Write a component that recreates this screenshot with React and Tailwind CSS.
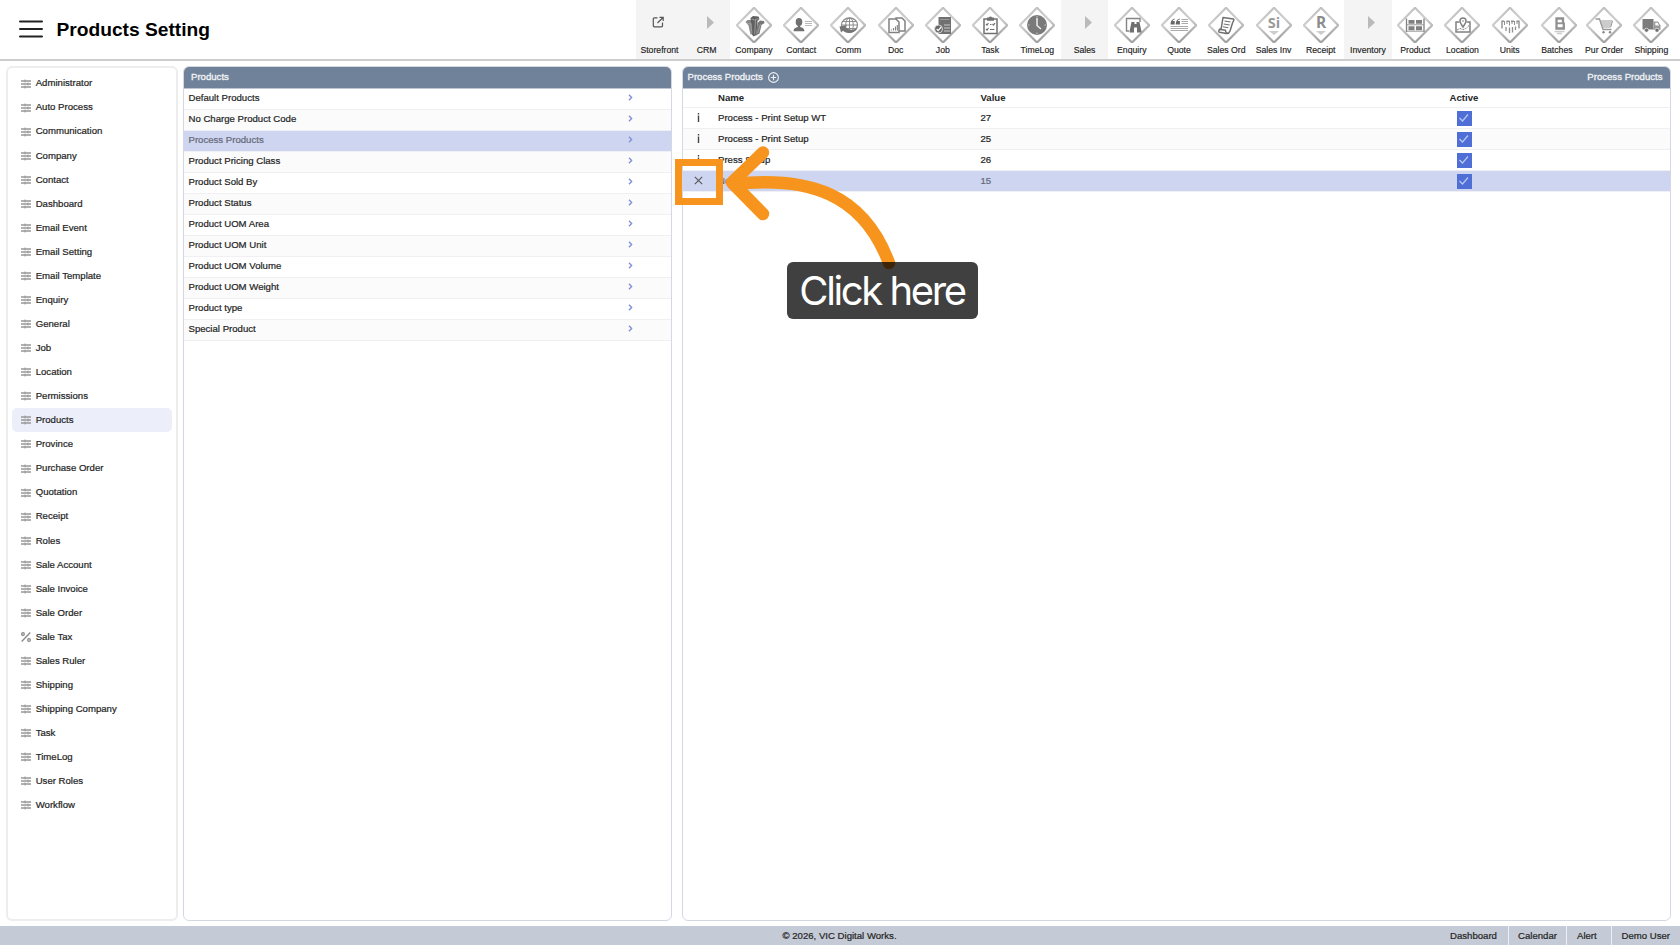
import React from "react";

const settings = [
  "Administrator", "Auto Process", "Communication", "Company", "Contact", "Dashboard", "Email Event",
  "Email Setting", "Email Template", "Enquiry", "General", "Job", "Location", "Permissions", "Products",
  "Province", "Purchase Order", "Quotation", "Receipt", "Roles", "Sale Account", "Sale Invoice",
  "Sale Order", "Sale Tax", "Sales Ruler", "Shipping", "Shipping Company", "Task", "TimeLog",
  "User Roles", "Workflow",
];

const products = [
  "Default Products", "No Charge Product Code", "Process Products", "Product Pricing Class",
  "Product Sold By", "Product Status", "Product UOM Area", "Product UOM Unit", "Product UOM Volume",
  "Product UOM Weight", "Product type", "Special Product",
];

const rows = [
  { name: "Process - Print Setup WT", value: "27" },
  { name: "Process - Print Setup", value: "25" },
  { name: "Press Setup", value: "26" },
  { name: "New", value: "15", selected: true },
];

/* Glyphs are drawn in a 36x36 box, centred on 18,18. */
const glyphs = {
  Company: (
    <g>
      <path d="M9.500 15l2-2 3.500 0 2 2 .5 12-3 .5-2-9z" fill="#8a8a8a" />
      <path d="M14.500 11l2.500-2 5.500.5 1 2.500-2 2-1 14-3 1.500-1.500-2z" fill="#606060" />
      <path d="M21.500 16l2.500-2.500 4 .5.500 2-3 2-2 8.500-3.500 2z" fill="#777" />
      <path d="M11.500 16.500l4 .5M15 16.500l1 10M19.500 12.500l-.8 15M15.500 12l3 1 4-1.500M24.500 17l-3 9" fill="none" stroke="#b0b0b0" strokeWidth=".7" />
    </g>
  ),
  Contact: (
    <g>
      <ellipse cx="16" cy="15" rx="3.300" ry="4" fill="#707070" />
      <path d="M10.600 24.200c0-3.200 2.200-3.400 4.200-4.200v-2h2.400v2c2 .8 4.200 1 4.200 4.200z" fill="#707070" />
      <path d="M22 14.500h7M22 16.500h7M22 18.500h7" stroke="#bbb" strokeWidth="1" />
    </g>
  ),
  Comm: (
    <g fill="none" stroke="#8c8c8c">
      <ellipse cx="19.500" cy="18" rx="8" ry="7" strokeWidth="1.300" />
      <ellipse cx="19.500" cy="18" rx="3.800" ry="7" />
      <path d="M11.500 18h16M13 14.500h13M13 21.500h13M19.500 11v14" />
      <path d="M9.500 19.500l7.500-1.500-1.500 2.200c2.500 2.800 7 3.300 12 1-3 5-10 6.300-14.500 2.500l-2 1.800z" fill="#757575" stroke="none" />
    </g>
  ),
  Doc: (
    <g fill="#fff" stroke="#808080" strokeWidth="1.500">
      <path d="M18 11h6l3 3v10h-9z" />
      <path d="M11 12h7l3 3v10.500H11z" />
      <path d="M13.500 23.500v-1M15.500 23.500v-2.500M17.500 23.500v-4M19.300 23.500v-5.500" strokeWidth="1.100" />
    </g>
  ),
  Job: (
    <g>
      <path d="M13.500 10H26v17H13.500z" fill="#707070" />
      <path d="M19 18h6M19 21h6M19 24h6" stroke="#ccc" strokeWidth="1" />
      <path d="M15 12.500h9.500" stroke="#999" strokeWidth="1" />
      <circle cx="13.500" cy="22" r="4" fill="#666" stroke="#eee" strokeWidth=".8" />
      <path d="M11.700 22l1.500 1.600 3-3.600" fill="none" stroke="#fff" strokeWidth="1.200" />
    </g>
  ),
  Task: (
    <g fill="none" stroke="#707070">
      <path d="M12 12h13v14.500H12z" fill="#fff" strokeWidth="1.500" />
      <path d="M15 10.500h2a1.600 1.600 0 0 1 3 0h2v3.300h-7z" fill="#707070" stroke="none" />
      <path d="M14 17l1 1 1.500-2M14 22l1 1 1.500-2M18 17.500h1.500M20.500 17l1 1 1.500-2M18 22.500h4.500" strokeWidth="1.200" />
    </g>
  ),
  TimeLog: (
    <g>
      <circle cx="18" cy="18" r="10" fill="#7a7a7a" />
      <path d="M18 11v7.500l4 3.500" fill="none" stroke="#eee" strokeWidth="1.500" />
      <path d="M18 9v1.500M18 25.500V27M9 18h1.500M25.500 18H27" stroke="#ccc" strokeWidth="1" />
    </g>
  ),
  Enquiry: (
    <g>
      <path d="M15 24h-2.500V11.500H26V15" fill="none" stroke="#858585" strokeWidth="1.400" />
      <path d="M17.500 15h3v2h2v-2h3l2 9.500v1h-4.500v-5h-3v5h-4.500v-1z" fill="#707070" />
    </g>
  ),
  Quote: (
    <g>
      <path d="M13.500 11.500c-3 1-4 3-4 6h4.200v-3.500H11.700c0-.8.800-1.300 2-1.600zM18.700 11.500c-3 1-4 3-4 6h4.200v-3.500h-2c0-.8.800-1.300 2-1.600z" fill="#666" />
      <path d="M20.500 12.500h6.500M20.500 14.500h6.500M20.500 16.500h6.500M9.500 19.500h17.500M9.500 21.500h17.500M9.500 23.500h17.500" stroke="#aaa" strokeWidth="1" />
    </g>
  ),
  "Sales Ord": (
    <g fill="#fff" stroke="#707070" strokeWidth="1.500" strokeLinejoin="round">
      <path d="M15 10.500l10.500 1.500c1.500 1-.5 2-1 4l-2.500 8c-.8 2-2 2.800-3.500 2.500l-7-1.200c-1.500-.5-.5-2 0-3l1.500.2z" />
      <path d="M11.500 22.300l6 1c.2 2 .8 3.200 2.500 3" fill="none" />
      <path d="M16.500 14l6 1M15.700 17l6 1M14.800 19.700l5.500 1" strokeWidth="1.100" />
    </g>
  ),
  "Sales Inv": (
    <g>
      <text x="18" y="21.300" textAnchor="middle" fontSize="14.500" fontWeight="700" fill="#999" fontFamily="Open Sans, sans-serif">Si</text>
      <path d="M13 24h10l-5 4z" fill="#ccc" />
    </g>
  ),
  Receipt: (
    <g>
      <text x="18" y="21.300" textAnchor="middle" fontSize="15.500" fontWeight="700" fill="#8c8c8c" fontFamily="Open Sans, sans-serif">R</text>
      <path d="M13 24h10l-5 4z" fill="#ccc" />
    </g>
  ),
  Product: (
    <g>
      <path d="M9.500 11.500v13.500M27 11.500v13.500" stroke="#808080" strokeWidth="1.300" />
      <path d="M9.500 17.800H27M9.500 24.200H27" stroke="#999" strokeWidth="1" />
      <path d="M11.500 13h6v3.800h-6zM19 13h6v3.800h-6zM11.500 19.300h6v4h-6zM19 19.300h6v4h-6z" fill="#808080" />
    </g>
  ),
  Location: (
    <g fill="none" stroke="#808080" strokeWidth="1.500">
      <path d="M15.500 15h-3.500v10h14V15h-3.500" />
      <path d="M19 20c-2-3-3-4-3-6a3 3 0 0 1 6 0c0 2-1 3-3 6z" fill="#fff" />
      <circle cx="19" cy="14" r=".8" fill="#808080" stroke="none" />
      <path d="M13 23l3-1.500 3 1 3-1 3-3" strokeWidth="1" strokeDasharray="2 1" />
    </g>
  ),
  Units: (
    <g fill="none" stroke="#909090" strokeWidth="1.400">
      <path d="M10 21.500v-7.200H12M24.500 14.300H27v7.200M14.500 14.300h3M19 14.300h3" />
      <path d="M12.500 14v4M15 14v3M17.500 14v4.500M20 14v3M22.500 14v4M25 14v3" strokeWidth="1" />
      <path d="M14 20v4M17.500 20.500v5.500M20.500 20v5.500M23.500 19.500v3.500" strokeWidth="1.300" />
    </g>
  ),
  Batches: (
    <g>
      <path d="M15.500 11.500h6.500v4l.8 1v5h-7.300z" fill="none" stroke="#909090" strokeWidth="2.300" />
      <path d="M15.500 16.300h6.500" stroke="#909090" strokeWidth="1.800" />
      <path d="M13.500 24.500h10M16 26.500h5" stroke="#ccc" strokeWidth="1.300" />
    </g>
  ),
  "Pur Order": (
    <g fill="none" stroke="#999" strokeWidth="1.400">
      <path d="M9.500 12h4l3.500 10.500h8.500" />
      <path d="M15 14h11.500l-1.700 6h-8M15.500 16h10M16 18h9" strokeWidth="1" />
      <circle cx="17.500" cy="25.300" r="1.200" fill="#888" stroke="none" />
      <circle cx="24" cy="25.300" r="1.200" fill="#888" stroke="none" />
    </g>
  ),
  Shipping: (
    <g>
      <path d="M9.500 12h11v10.500h-11z" fill="#7c7c7c" />
      <path d="M20.500 14.500h4.500l2.500 4v4.500h-7z" fill="#999" />
      <path d="M22.300 15.800h2.200l1.500 2.700h-3.700z" fill="#fff" />
      <circle cx="13.500" cy="23.200" r="2" fill="#6c6c6c" stroke="#fff" strokeWidth=".6" />
      <circle cx="24" cy="23.200" r="2" fill="#6c6c6c" stroke="#fff" strokeWidth=".6" />
    </g>
  ),
};

const nav = [
  "Storefront", "CRM", "Company", "Contact", "Comm", "Doc", "Job", "Task", "TimeLog", "Sales", "Enquiry",
  "Quote", "Sales Ord", "Sales Inv", "Receipt", "Inventory", "Product", "Location", "Units", "Batches",
  "Pur Order", "Shipping",
];

function NavIcon({ name }) {
  if (name === "Storefront") {
    return (
      <svg className="-ml-0.5 mt-4 size-3" viewBox="0 0 12 12" fill="none" stroke="#555" strokeWidth="1.200">
        <path d="M5.500 1.800H2.300c-.6 0-1 .4-1 1v7c0 .6.400 1 1 1h7.200c.6 0 1-.4 1-1V6.500M7.500 1.300h3.700V5M11 1.500L5.500 7" />
      </svg>
    );
  }
  if (!glyphs[name]) {
    return (
      <svg className="ml-[7px] mt-4 h-[13px] w-[7px]" viewBox="0 0 7 13">
        <path d="M0 0v13l7-6.500z" fill="#bababa" />
      </svg>
    );
  }
  return (
    <svg className={name === "Batches" ? "ml-1 mt-[7px] size-9" : "mt-[7px] size-9"} viewBox="0 0 36 36">
      <defs>
        <linearGradient id="edge" x1="0" y1="0" x2=".3" y2="1">
          <stop offset="0" stopColor="#bdbdbd" />
          <stop offset=".5" stopColor="#cecece" />
          <stop offset="1" stopColor="#a2a2a2" />
        </linearGradient>
      </defs>
      <path d="M18 .8L35.200 18.200 18 35.500 .8 18.200z" fill="#fff" stroke="url(#edge)" strokeWidth="2.200" />
      {glyphs[name]}
    </svg>
  );
}

function NavItem({ name }) {
  return (
    <div className={`flex w-[47.240px] shrink-0 flex-col items-center ${glyphs[name] ? "" : "bg-[#f4f4f4]"}`}>
      <div className="flex h-[45px] items-start justify-center">
        <NavIcon name={name} />
      </div>
      <span className="whitespace-nowrap text-[8.700px] leading-[11px] text-[#222] [-webkit-text-stroke:0.150px]">{name}</span>
    </div>
  );
}

function SettingIcon({ percent }) {
  return percent ? (
    <svg className="size-2.5" viewBox="0 0 10 10" fill="none" stroke="#888" strokeWidth="1.300">
      <path d="M9.300.5L.7 9.500" />
      <circle cx="2" cy="2" r="1.300" />
      <circle cx="8" cy="8" r="1.300" />
    </svg>
  ) : (
    <svg className="size-2.5" viewBox="0 0 10 10" fill="none" stroke="#989898">
      <path d="M0 2h10M0 5h10M0 8h10" strokeWidth="1.300" />
      <path d="M4 .5v3M7 3.500v3M4 6.500v3" strokeWidth="1" />
    </svg>
  );
}

function Check() {
  return (
    <span className="flex size-[15px] items-center justify-center bg-[#4f6fd6]">
      <svg className="h-2.5 w-3" viewBox="0 0 12 10" fill="none" stroke="#b9c7f2" strokeWidth="1.200">
        <path d="M1.500 5l3 3L10 1.500" />
      </svg>
    </span>
  );
}

const grid = "grid grid-cols-[35px_262.500px_458.500px_50px_1fr] items-center";

export default function App() {
  return (
    <div className="relative flex h-[945px] w-[1680px] flex-col overflow-hidden bg-white font-['Liberation_Sans',Arial,sans-serif] text-[9.600px] text-[#262626] [-webkit-text-stroke:0.220px]">
      <header className="flex h-[61px] shrink-0 border-b-2 border-[#cdcdcd] pr-[5px]">
        <div className="flex flex-1 items-center pl-[19px]">
          <svg className="mb-px h-[18px] w-6" viewBox="0 0 24 18" stroke="#222" strokeWidth="2" strokeLinecap="round">
            <path d="M1 1.500h22M1 9h22M1 16.500h22" />
          </svg>
          <h1 className="ml-[13.500px] text-[19.200px] font-bold leading-6 text-black [-webkit-text-stroke:0]">Products Setting</h1>
        </div>
        <nav className="flex">
          {nav.map((n) => <NavItem key={n} name={n} />)}
        </nav>
      </header>

      <main className="flex h-[860px] shrink-0 pl-[5.500px] pt-[5px]">
        <aside className="h-[855px] w-[172.500px] shrink-0 rounded-md border-2 border-[#ededed] px-1 pt-[3.500px]">
          {settings.map((s) => (
            <div key={s} className={`flex h-[24.070px] items-center gap-[4.700px] rounded-[5px] pl-[9.500px] ${s === "Products" ? "bg-[#eceefa]" : ""}`}>
              <SettingIcon percent={s === "Sale Tax"} />
              <span>{s}</span>
            </div>
          ))}
        </aside>

        <section className="ml-[5px] h-[855px] w-[489px] shrink-0 overflow-hidden rounded-md border border-[#d3d8e2]">
          <div className="flex h-[21.500px] items-center border-b border-[#bcc5d3] bg-[#708299] pl-[7px] text-[#f1f3f6] [-webkit-text-stroke:0.320px]">Products</div>
          {products.map((p, i) => (
            <div
              key={p}
              className={`flex h-[21px] items-center justify-between border-b border-[#f0f0f2] pl-[4.500px] pr-[38px] ${
                p === "Process Products" ? "bg-[#ced5f0] text-[#666a78]" : i % 2 ? "bg-[#fbfbfb]" : ""
              }`}
            >
              <span>{p}</span>
              <svg className="mb-[3px] h-[7px] w-[5px]" viewBox="0 0 5 7" fill="none" stroke="#8090da" strokeWidth="1.400">
                <path d="M1 .8l2.600 2.700L1 6.200" />
              </svg>
            </div>
          ))}
        </section>

        <section className="ml-2.5 h-[855px] w-[989px] shrink-0 overflow-hidden rounded-md border border-[#d3d8e2]">
          <div className="flex h-[21.500px] items-center justify-between border-b border-[#bcc5d3] bg-[#708299] pl-[4.500px] pr-[7.500px] text-[#f1f3f6] [-webkit-text-stroke:0.320px]">
            <span className="flex items-center gap-[5px]">
              Process Products
              <svg className="size-[11px]" viewBox="0 0 11 11" fill="none" stroke="#eef1f5" strokeWidth="1.100">
                <circle cx="5.500" cy="5.500" r="4.900" />
                <path d="M5.500 2.800v5.400M2.800 5.500h5.400" />
              </svg>
            </span>
            <span>Process Products</span>
          </div>
          <div className={`${grid} h-[19.500px] border-b border-[#f0f0f2] pt-px font-bold [-webkit-text-stroke:0]`}>
            <span />
            <span>Name</span>
            <span>Value</span>
            <span className="text-center">Active</span>
          </div>
          {rows.map((r, i) => (
            <div
              key={r.name}
              className={`${grid} h-[21px] border-b border-[#f0f0f2] ${
                r.selected ? "bg-[#ced5f0] text-[#666a78]" : i % 2 ? "bg-[#fbfbfb]" : ""
              }`}
            >
              <span className="flex justify-center pb-px pr-[5px]">
                {r.selected ? (
                  <svg className="size-[9px]" viewBox="0 0 9 9" stroke="#555" strokeWidth="1.100">
                    <path d="M.8.8l7.400 7.400M8.200.8L.8 8.200" />
                  </svg>
                ) : (
                  <svg className="h-[9px] w-[3px]" viewBox="0 0 3 9" fill="#444">
                    <path d="M.8 0h1.400v1.400H.8zM.8 2.600h1.400V9H.8z" />
                  </svg>
                )}
              </span>
              <span>{r.name}</span>
              <span>{r.value}</span>
              <span className="flex justify-center"><Check /></span>
            </div>
          ))}
        </section>
      </main>

      <footer className="mt-[5px] flex h-[19px] shrink-0 items-center bg-[#c5cbd6]">
        <span className="ml-[782.500px] flex-1 pt-px">© 2026, VIC Digital Works.</span>
        <span className="flex h-full w-[67px] items-center border-r border-[#eceff3] pl-2 pt-px">Dashboard</span>
        <span className="flex h-full w-[58px] items-center border-r border-[#eceff3] pl-[9px] pt-px">Calendar</span>
        <span className="flex h-full w-[45px] items-center border-r border-[#eceff3] pl-2.5 pt-px">Alert</span>
        <span className="flex h-full w-[68px] items-center pl-[9.500px] pt-px">Demo User</span>
      </footer>

      {/* Callout over the table */}
      <div className="absolute left-[675px] top-[159px] h-[46px] w-[48px] border-[7px] border-[#f7941e]" />
      <svg className="absolute left-[720px] top-[140px] h-[135px] w-[185px]" viewBox="720 140 185 135" fill="none" stroke="#f7941e" strokeWidth="12.500" strokeLinecap="round" strokeLinejoin="round">
        <path d="M763 152.500L732 182.500 763 214" />
        <path d="M734 184C808 176 863 193 889 263" />
      </svg>
      <div className="absolute left-[787px] top-[262px] flex h-[57px] w-[191px] items-center justify-center rounded-md bg-black/75 font-[Inter,sans-serif] text-[40px] leading-none tracking-[-2.400px] text-white [-webkit-text-stroke:0]">
        <span className="pr-px">Click here</span>
      </div>
    </div>
  );
}
